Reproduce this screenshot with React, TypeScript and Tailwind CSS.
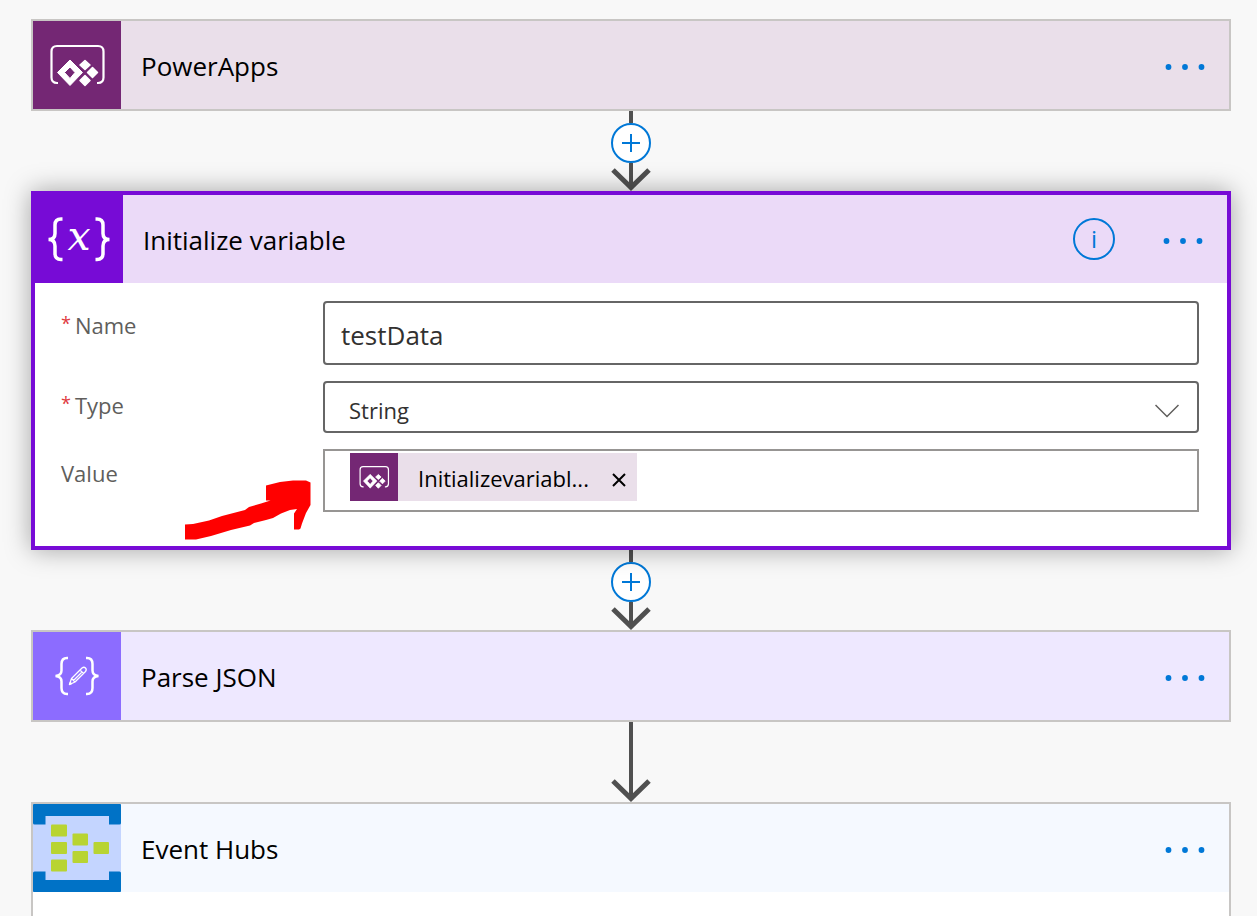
import type { ReactNode } from "react";

function PowerAppsIcon({ className }: { className: string }) {
  return (
    <svg viewBox="0 0 88 88" className={className} aria-hidden="true">
      <path
        d="M25 62h-1q-5.500 0-5.500-5.500V30.500q0-5.500 5.500-5.500h41q5.500 0 5.500 5.500V56.500q0 5.500-5.500 5.500h-1"
        fill="none"
        stroke="#fff"
        strokeWidth="2.200"
      />
      <path
        d="M37 39L49.500 51.500 37 64.500 24.500 51.500zM37 46L31.500 51.500 37 57.500 42 51.500z"
        fill="#fff"
        fillRule="evenodd"
        stroke="#fff"
        strokeLinejoin="round"
      />
      <path
        d="M52 39.500L57 44 52 48.500 47 44zM59.500 46.500L64.500 51.500 59.500 56.500 54.500 51.500zM52 54.500L57 59.500 52 64.500 47 59.500z"
        fill="#fff"
        stroke="#fff"
        strokeWidth="1.500"
        strokeLinejoin="round"
      />
    </svg>
  );
}

function VariableIcon() {
  return (
    <svg viewBox="0 0 88 88" className="size-22" aria-hidden="true">
      <g fill="none" stroke="#fff" strokeWidth="3.500">
        <path d="M27.500 24h-1.500q-6 0-6 6v8.500q0 6-6.500 6 6.500 0 6.500 6.500v7.500q0 6 6 6h1.500" />
        <path d="M60.500 24h1.500q6 0 6 6v8.500q0 6 6.500 6-6.500 0-6.500 6.500v7.500q0 6-6 6h-1.500" />
      </g>
      <text
        x="44"
        y="55"
        textAnchor="middle"
        fill="#fff"
        fontSize="41"
        fontStyle="italic"
        fontFamily="'DejaVu Serif', 'Liberation Serif', serif"
      >
        x
      </text>
    </svg>
  );
}

function ParseIcon() {
  return (
    <svg viewBox="0 0 88 88" className="size-22" aria-hidden="true">
      <g fill="none" stroke="#fff" strokeWidth="2.500">
        <path d="M35 26h-1q-5.500 0-5.500 6v6.500q0 5-6 5.500 6 .5 6 5.500v6.500q0 6 5.500 6h1" />
        <path d="M53 26h1q5.500 0 5.500 6v6.500q0 5 6 5.500-6 .5-6 5.500v6.500q0 6-5.500 6h-1" />
      </g>
      <g fill="none" stroke="#fff" strokeWidth="1.300" strokeLinejoin="round">
        <path d="M36.500 52.500l2-6 10.500-10.500q2-1.500 3.500 0t0 3.500L42 50zM38.500 46.500l3.500 3.500M47 38l3.500 3.500M40.500 48.500L49 40" />
        <path d="M36.500 52.500l.8-2 1.200 1.200z" fill="#fff" />
      </g>
    </svg>
  );
}

function EventHubsIcon() {
  return (
    <svg viewBox="0 0 88 88" className="size-22" aria-hidden="true">
      <path d="M1 0h86q1 0 1 1v18q0 1.500-1.500 1.500H76V12H12.500v8.500h-11Q0 20.500 0 19V1q0-1 1-1z" fill="#0072c6" />
      <path d="M1 88h86q1 0 1-1V69q0-1.500-1.500-1.500H76V76H12.500v-8.500h-11Q0 67.500 0 69v18q0 1 1 1z" fill="#0072c6" />
      <g fill="#b8d432">
        <rect x="18" y="20.500" width="16" height="12" rx="1" />
        <rect x="18" y="38" width="16" height="12" rx="1" />
        <rect x="18" y="55.500" width="16" height="12" rx="1" />
        <rect x="39.500" y="29.500" width="15.500" height="12" rx="1" />
        <rect x="39.500" y="47" width="15.500" height="12" rx="1" />
        <rect x="60.500" y="38" width="15.500" height="12" rx="1" />
      </g>
    </svg>
  );
}

function MoreButton() {
  return (
    <button type="button" aria-label="More commands" className="flex h-10 w-10 items-center pt-1 text-[#0078d7]">
      <svg viewBox="0 0 40 8" className="w-10 h-2" fill="currentColor" aria-hidden="true">
        <circle cx="3.500" cy="4" r="2.900" />
        <circle cx="20" cy="4" r="2.900" />
        <circle cx="36.500" cy="4" r="2.900" />
      </svg>
    </button>
  );
}

type HeaderProps = {
  title: string;
  icon: ReactNode;
  iconClass: string;
  className: string;
  children?: ReactNode;
};

function StepHeader({ title, icon, iconClass, className, children }: HeaderProps) {
  return (
    <div className={`flex h-22 items-center pr-6 ${className}`}>
      <div className={`size-22 shrink-0 ${iconClass}`}>{icon}</div>
      <h2 className="ml-5 flex-1 truncate pt-0.5 text-[26px] leading-9 text-black">{title}</h2>
      {children}
      <MoreButton />
    </div>
  );
}

function Connector({ canAdd = false }: { canAdd?: boolean }) {
  return (
    <div className="flex h-20 flex-col items-center">
      <div className={canAdd ? "h-3 w-1 bg-[#505050]" : "h-13 w-1 bg-[#505050]"} />
      {canAdd && (
        <button
          type="button"
          aria-label="Insert a new step"
          className="flex size-10 shrink-0 items-center justify-center rounded-full border-2 border-[#0078d7] bg-white text-[#0078d7]"
        >
          <svg viewBox="0 0 18 18" className="size-[18px]" stroke="currentColor" strokeWidth="2" aria-hidden="true">
            <path d="M9 0v18M0 9h18" />
          </svg>
        </button>
      )}
      <svg viewBox="0 0 40 28" className="h-7 w-10 shrink-0" fill="none" stroke="#505050" aria-hidden="true">
        <path d="M20 0v25" strokeWidth="4" />
        <path d="M2 7l18 17.500L38 7" strokeWidth="5" />
      </svg>
    </div>
  );
}

function FieldLabel({ htmlFor, required, children }: { htmlFor: string; required?: boolean; children: string }) {
  return (
    <label htmlFor={htmlFor} className="flex w-[262px] shrink-0 pt-2 text-[22px] leading-8 text-[#605e5c]">
      {required && <span className="mr-1 text-lg leading-7 text-[#e03a3e]">*</span>}
      {children}
    </label>
  );
}

export default function App() {
  return (
    <main className="flex min-h-screen flex-col bg-[#f8f8f8] pt-[19px] pr-[26px] pl-[31px] font-['Open_Sans','Noto_Sans',sans-serif]">
      <section className="border-2 border-[#c8c6c4]">
        <StepHeader
          title="PowerApps"
          icon={<PowerAppsIcon className="size-22" />}
          iconClass="bg-[#742774]"
          className="bg-[#eadfea]"
        />
      </section>

      <Connector canAdd />

      <section className="relative border-4 border-[#770bd6] bg-white shadow-[0_0_24px_rgba(0,0,0,0.35)]">
        <StepHeader
          title="Initialize variable"
          icon={<VariableIcon />}
          iconClass="bg-[#770bd6]"
          className="bg-[#ebdaf8]"
        >
          <button
            type="button"
            aria-label="Information"
            className="mr-12 flex size-[42px] items-center justify-center rounded-full border-2 border-[#0078d7] text-2xl text-[#0078d7]"
          >
            i
          </button>
        </StepHeader>

        <div className="flex flex-col gap-4 pt-[18px] pr-7 pb-[34px] pl-[26px]">
          <div className="flex">
            <FieldLabel htmlFor="name" required>Name</FieldLabel>
            <input
              id="name"
              type="text"
              defaultValue="testData"
              className="h-16 min-w-0 flex-1 rounded-sm border-2 border-[#666] bg-white px-4 pt-1 text-[26px] text-[#323130]"
            />
          </div>
          <div className="flex">
            <FieldLabel htmlFor="type" required>Type</FieldLabel>
            <div className="relative min-w-0 flex-1">
              <select
                id="type"
                defaultValue="String"
                className="h-13 w-full appearance-none rounded-sm border-2 border-[#666] bg-white px-6 pt-1.5 text-[22px] text-[#323130]"
              >
                <option>Boolean</option>
                <option>Integer</option>
                <option>Float</option>
                <option>String</option>
                <option>Object</option>
                <option>Array</option>
              </select>
              <svg
                viewBox="0 0 24 14"
                className="pointer-events-none absolute top-[23px] right-5 h-3.5 w-6"
                fill="none"
                stroke="#605e5c"
                strokeWidth="1.500"
                aria-hidden="true"
              >
                <path d="M.5 1L12 12.500 23.500 1" />
              </svg>
            </div>
          </div>
          <div className="flex">
            <FieldLabel htmlFor="value">Value</FieldLabel>
            <div className="flex h-[63px] min-w-0 flex-1 border-2 border-[#979593] bg-white pt-0.5 pl-[25px]">
              <div className="flex h-12 shrink-0 items-center bg-[#eadfea] pr-2">
                <div className="size-12 bg-[#742774]">
                  <PowerAppsIcon className="size-12" />
                </div>
                <span className="ml-5 pt-0.5 text-[22px] leading-8 text-black">Initializevariabl...</span>
                <button type="button" aria-label="Remove" className="ml-5 flex h-12 w-5 items-center justify-center pt-1.5">
                  <svg viewBox="0 0 14 14" className="size-3.5" stroke="#000" strokeWidth="2" aria-hidden="true">
                    <path d="M1 1l12 12M13 1L1 13" />
                  </svg>
                </button>
              </div>
              <input id="value" type="text" className="h-12 min-w-0 flex-1 bg-transparent px-1 text-[22px] outline-none" />
            </div>
          </div>
        </div>

        <svg viewBox="0 0 126 60" className="absolute bottom-1.5 left-[150px] h-[60px] w-[126px]" aria-hidden="true">
          <path
            d="M0 44.500L8 44 24 40.500 37 36 60 30 64 27 76 23.500 85.500 20.500H81V5.500L95 2 108 .5 121 .5 125.500 2.500V25L121 33 117 43.500 115.500 48.500 114 49.500H109V33.500L112 29 105 30 96 33.500 88 38 81 40 69 43 65 45.500 46 50 26 56 11 59.500H0z"
            fill="#f00"
          />
        </svg>
      </section>

      <Connector canAdd />

      <section className="border-2 border-[#c8c6c4]">
        <StepHeader title="Parse JSON" icon={<ParseIcon />} iconClass="bg-[#8c6cff]" className="bg-[#eee8ff]" />
      </section>

      <Connector />

      <section className="flex-1 border-2 border-b-0 border-[#c8c6c4] bg-white">
        <StepHeader title="Event Hubs" icon={<EventHubsIcon />} iconClass="bg-[#c4d5ff]" className="bg-[#f5f9ff]" />
      </section>
    </main>
  );
}
